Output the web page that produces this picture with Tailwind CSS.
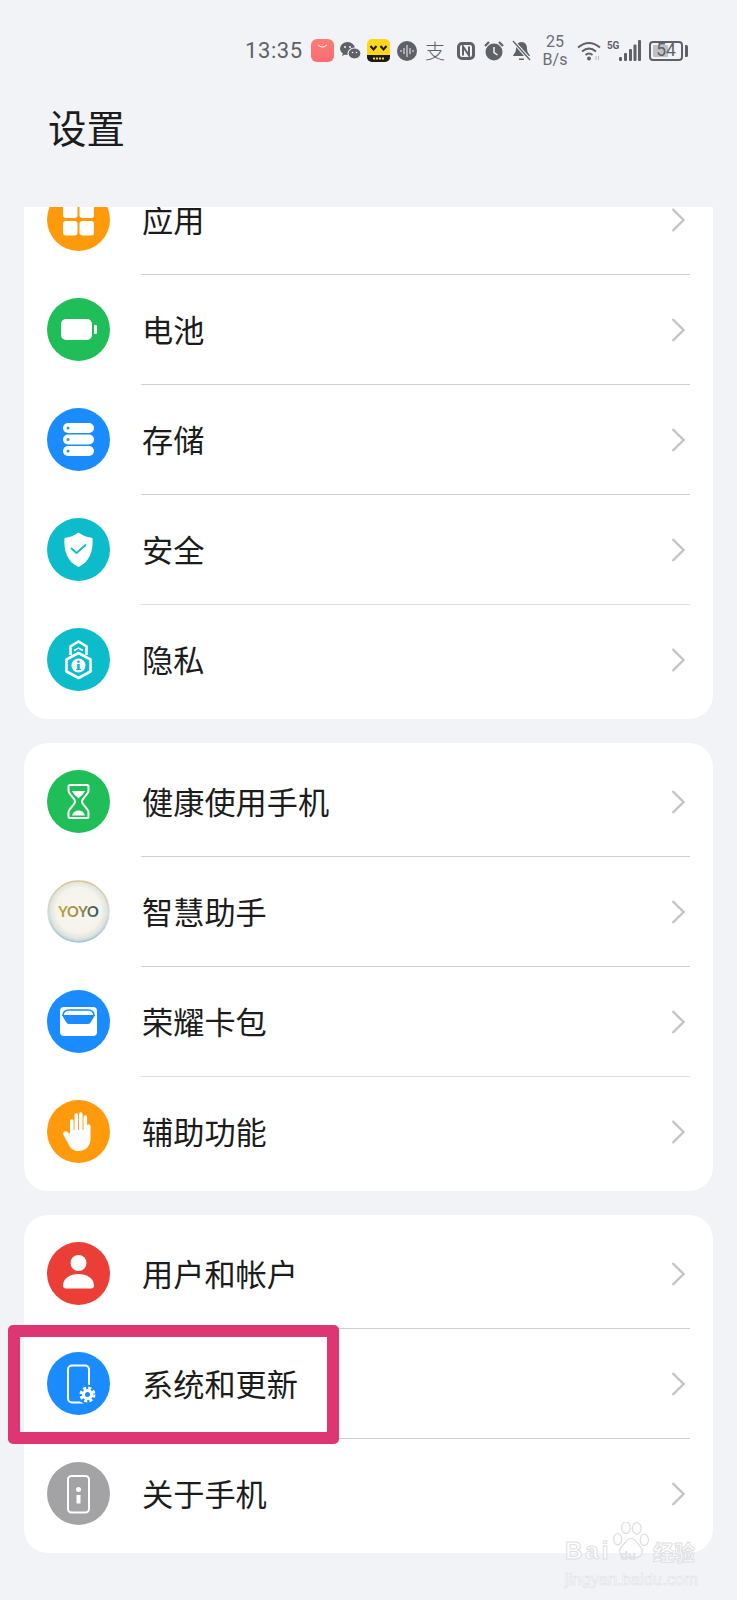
<!DOCTYPE html>
<html lang="zh-CN">
<head>
    <meta charset="UTF-8">
    <meta name="viewport" content="width=device-width, initial-scale=1.0">
    <title>设置</title>
    <script src="https://cdn.jsdelivr.net/npm/@tailwindcss/browser@4"></script>
</head>
<body class="relative w-[737px] h-[1600px] overflow-hidden bg-[#f1f3f7] font-['Noto_Sans_CJK_SC',sans-serif] text-[#1c1c1c]">

    <!-- Status bar -->
    <div class="h-[100px] pt-[1px] flex items-center pl-[245px] text-[#5e6167] font-['Roboto',sans-serif]">
        <span class="w-[60px] text-[22px] tracking-[0.6px]">13:35</span>
        <svg class="ml-[6px]" width="23" height="23" viewBox="0 0 23 23"><defs><linearGradient id="shopBg" x1="0" y1="0" x2="0" y2="1"><stop offset="0%" stop-color="#fb7d74"/><stop offset="100%" stop-color="#fb6b73"/></linearGradient></defs><rect width="23" height="23" rx="6" fill="url(#shopBg)"/><path d="M7 6q4.500 4 9 0" fill="none" stroke="#fff" stroke-width="1"/></svg>
        <svg class="ml-[6px]" width="21" height="18" viewBox="0 0 21 18" fill="#5e6167"><ellipse cx="7.500" cy="6.500" rx="7.500" ry="6.500"/><path d="M3 11l-1 3 4-2z"/><ellipse cx="14.500" cy="11.500" rx="6.500" ry="5.500" stroke="#f1f3f7" stroke-width="1.200"/><circle cx="5" cy="5" r="1" fill="#f1f3f7"/><circle cx="10" cy="5" r="1" fill="#f1f3f7"/><circle cx="12.500" cy="10.500" r=".8" fill="#f1f3f7"/><circle cx="16.500" cy="10.500" r=".8" fill="#f1f3f7"/></svg>
        <svg class="ml-[6px]" width="23" height="23" viewBox="0 0 23 23"><rect width="23" height="23" rx="5" fill="#fdd71c"/><path d="M0 16h23v2a5 5 0 0 1-5 5H5a5 5 0 0 1-5-5z" fill="#1a1a1a"/><path d="M3.500 7l3 3.500 3-3.500M13.500 7l3 3.500 3-3.500" fill="none" stroke="#1a1a1a" stroke-width="2"/><path d="M6 19.500h11" stroke="#fdd71c" stroke-width="2" stroke-dasharray="2 1"/></svg>
        <svg class="ml-[7px]" width="20" height="20" viewBox="0 0 20 20"><circle cx="10" cy="10" r="10" fill="#5e6167"/><path d="M4 9v2M7 7v6M10 4v12M13 7v6M16 9v2" stroke="#f1f3f7" stroke-width="1"/></svg>
        <span class="ml-[8px] w-[21px] text-[20px] leading-none font-['Noto_Sans_CJK_SC',sans-serif] font-light">支</span>
        <svg class="ml-[11px]" width="18" height="18" viewBox="0 0 18 18" fill="none"><rect x="1.500" y="1.500" width="15" height="15" rx="3.500" stroke="#5e6167" stroke-width="3"/><path d="M6 13.500V4.500l6 9V4.500" stroke="#5e6167" stroke-width="2"/></svg>
        <svg class="ml-[9px]" width="20" height="20" viewBox="0 0 20 20"><circle cx="10" cy="11" r="8.500" fill="#5e6167"/><path d="M10 6v5.500l3.500 2.500" fill="none" stroke="#f1f3f7" stroke-width="1.500"/><path d="M1 5l4-4M19 5l-4-4" stroke="#5e6167" stroke-width="2.200"/></svg>
        <svg class="ml-[8px]" width="19" height="22" viewBox="0 0 19 22"><path d="M9.500 2c-4 0-5.500 3-5.500 6.500 0 4-2 5-3 7.500h17c-1-2.500-3-3.500-3-7.500C15 5 13.500 2 9.500 2z" fill="#5e6167"/><path d="M7 18.500h5V20H7z" fill="#5e6167"/><path d="M1 1l17 19" stroke="#f1f3f7" stroke-width="3.500"/><path d="M1 1l17 19" stroke="#5e6167" stroke-width="1.300"/></svg>
        <span class="ml-[11px] w-[26px] flex flex-col items-center text-[16px] leading-[18px] text-[#6a6d73]"><span>25</span><span>B/s</span></span>
        <svg class="ml-[9px]" width="24" height="20" viewBox="0 0 24 20" fill="none" stroke="#5e6167" stroke-width="2"><path d="M1 6.500q11-9 22 0M5 10.500q7-6 14 0M8.500 14q3.500-3 7 0"/><circle cx="12" cy="17.500" r="2" fill="#5e6167" stroke="none"/><path d="M19 15v4M21.500 15v4" stroke="#b5b7bb" stroke-width="1"/></svg>
        <span class="ml-[6px] self-start mt-[40px] w-[12px] text-[10px] font-bold leading-[9px] tracking-[-0.3px]">5G</span>
        <svg class="ml-[0px]" width="22" height="21" viewBox="0 0 22 21" fill="#5e6167"><rect x="0" y="17" width="3" height="4" rx="1"/><rect x="5" y="13" width="3" height="8" rx="1"/><rect x="10" y="9" width="3" height="12" rx="1"/><rect x="14.500" y="4.500" width="3" height="16.500" rx="1"/><rect x="19" y="0" width="3" height="21" rx="1"/></svg>
        <div class="ml-[8px] relative w-[34px] h-[20px] border-2 border-[#5e6167] rounded-[4px] flex items-center justify-center">
            <span class="absolute left-[2px] top-[2px] w-[15px] h-[12px] bg-[#bfc1c5] rounded-[1px]"></span>
            <span class="relative mt-[1px] text-[17.500px] leading-none">54</span>
        </div>
        <span class="ml-[1.500px] w-[3px] h-[12px] bg-[#5e6167] rounded-r-[1.500px]"></span>
    </div>

    <!-- Title -->
    <div class="h-[107px] pl-[48px] pt-[1px]">
        <h1 class="text-[38.500px] leading-[50px] font-normal">设置</h1>
    </div>

    <!-- List -->
    <div class="pl-[24px] pr-[24px]">
        <!-- Card 1, scrolled under the title -->
        <div class="h-[512px] overflow-hidden bg-white rounded-b-[24px]">
            <div class="-mt-[42px]">
                <div class="h-[110px] flex items-center pl-[23px] pr-[23px]">
                    <div class="-mt-[2px] w-[63px] h-[63px] shrink-0">
                        <svg width="63" height="63" viewBox="0 0 63 63"><circle cx="31.500" cy="31.500" r="31.500" fill="#ff9a0d"/><rect x="16" y="15" width="14.500" height="15" rx="3" fill="#fff"/><rect x="32.500" y="15" width="14.500" height="15" rx="3" fill="#fff"/><rect x="16" y="33" width="14.500" height="14.500" rx="3" fill="#fff"/><rect x="32.500" y="33" width="14.500" height="14.500" rx="3" fill="#fff"/></svg>
                    </div>
                    <div class="ml-[31px] h-full flex-1 flex items-center justify-between border-b border-[#cfcfd1]">
                        <span class="ml-[1px] -mt-[2px] text-[31.200px] leading-none">应用</span>
                        <svg class="mr-[5px]" width="14" height="24" viewBox="0 0 14 24" fill="none" stroke="#c4c4c6" stroke-width="2.400"><path d="M1.500 1l11 11-11 11"/></svg>
                    </div>
                </div>
                <div class="h-[110px] flex items-center pl-[23px] pr-[23px]">
                    <div class="-mt-[2px] w-[63px] h-[63px] shrink-0">
                        <svg width="63" height="63" viewBox="0 0 63 63"><circle cx="31.500" cy="31.500" r="31.500" fill="#1fbe58"/><rect x="14" y="21" width="31" height="21" rx="5" fill="#fff"/><rect x="47" y="27" width="3" height="9" rx="1" fill="#fff"/></svg>
                    </div>
                    <div class="ml-[31px] h-full flex-1 flex items-center justify-between border-b border-[#cfcfd1]">
                        <span class="ml-[1px] -mt-[2px] text-[31.200px] leading-none">电池</span>
                        <svg class="mr-[5px]" width="14" height="24" viewBox="0 0 14 24" fill="none" stroke="#c4c4c6" stroke-width="2.400"><path d="M1.500 1l11 11-11 11"/></svg>
                    </div>
                </div>
                <div class="h-[110px] flex items-center pl-[23px] pr-[23px]">
                    <div class="-mt-[2px] w-[63px] h-[63px] shrink-0">
                        <svg width="63" height="63" viewBox="0 0 63 63"><circle cx="31.500" cy="31.500" r="31.500" fill="#1a8cff"/><rect x="16" y="15" width="31" height="10" rx="5" fill="#fff"/><rect x="16" y="26.500" width="31" height="10" rx="5" fill="#fff"/><rect x="16" y="38" width="31" height="10" rx="5" fill="#fff"/><circle cx="21" cy="20" r="1.500" fill="#3f8fd6"/><circle cx="21" cy="31.500" r="1.500" fill="#3f8fd6"/><circle cx="21" cy="43" r="1.500" fill="#3f8fd6"/></svg>
                    </div>
                    <div class="ml-[31px] h-full flex-1 flex items-center justify-between border-b border-[#cfcfd1]">
                        <span class="ml-[1px] -mt-[2px] text-[31.200px] leading-none">存储</span>
                        <svg class="mr-[5px]" width="14" height="24" viewBox="0 0 14 24" fill="none" stroke="#c4c4c6" stroke-width="2.400"><path d="M1.500 1l11 11-11 11"/></svg>
                    </div>
                </div>
                <div class="h-[110px] flex items-center pl-[23px] pr-[23px]">
                    <div class="-mt-[2px] w-[63px] h-[63px] shrink-0">
                        <svg width="63" height="63" viewBox="0 0 63 63"><circle cx="31.500" cy="31.500" r="31.500" fill="#0cbccb"/><path d="M31.500 14.500c4 3 9 5 14 5.500 1 13-3 24-14 29-11-5-15-16-14-29 5-.5 10-2.500 14-5.500z" fill="#fff"/><path d="M24.500 30.500l5 4.500 9-8" fill="none" stroke="#0cbccb" stroke-width="1.800" stroke-linecap="round" stroke-linejoin="round"/></svg>
                    </div>
                    <div class="ml-[31px] h-full flex-1 flex items-center justify-between border-b border-[#dedee0]">
                        <span class="ml-[1px] -mt-[2px] text-[31.200px] leading-none">安全</span>
                        <svg class="mr-[5px]" width="14" height="24" viewBox="0 0 14 24" fill="none" stroke="#c4c4c6" stroke-width="2.400"><path d="M1.500 1l11 11-11 11"/></svg>
                    </div>
                </div>
                <div class="h-[110px] flex items-center pl-[23px] pr-[23px]">
                    <div class="-mt-[2px] w-[63px] h-[63px] shrink-0">
                        <svg width="63" height="63" viewBox="0 0 63 63"><circle cx="31.500" cy="31.500" r="31.500" fill="#0cbccb"/><path d="M31.500 25l12 6.500v12L31.500 50l-12-6.500v-12z" fill="none" stroke="#fff" stroke-width="2.600" stroke-linejoin="round"/><path d="M23.500 27v-8.500l8-5 8 5V27" fill="none" stroke="#fff" stroke-width="2.600"/><path d="M27 22.500l4.500-2.500 4.500 2.500" fill="none" stroke="#fff" stroke-width="1.500"/><circle cx="31.500" cy="37.500" r="7" fill="#fff"/><circle cx="31.500" cy="33.800" r="1.300" fill="#0cbccb"/><path d="M30 36h2.800v5H34v1h-5v-1h1.200v-4H30z" fill="#0cbccb"/></svg>
                    </div>
                    <div class="ml-[31px] h-full flex-1 flex items-center justify-between">
                        <span class="ml-[1px] -mt-[2px] text-[31.200px] leading-none">隐私</span>
                        <svg class="mr-[5px]" width="14" height="24" viewBox="0 0 14 24" fill="none" stroke="#c4c4c6" stroke-width="2.400"><path d="M1.500 1l11 11-11 11"/></svg>
                    </div>
                </div>
            </div>
        </div>

        <!-- Card 2 -->
        <div class="mt-[24px] bg-white rounded-[24px] pt-[4px] pb-[4px]">
            <div class="h-[110px] flex items-center pl-[23px] pr-[23px]">
                <div class="-mt-[2px] w-[63px] h-[63px] shrink-0">
                    <svg width="63" height="63" viewBox="0 0 63 63"><circle cx="31.500" cy="31.500" r="31.500" fill="#1fbe58"/><path d="M23 15h17q1.500 0 1.500 1.500v4c0 4-6.500 7.500-6.500 11s6.500 7 6.500 11v4Q41.500 48 40 48H23q-1.500 0-1.500-1.500v-4c0-4 6.500-7.500 6.500-11s-6.500-7-6.500-11v-4Q21.500 15 23 15z" fill="none" stroke="#fff" stroke-width="2" stroke-linejoin="round"/><path d="M25 21h13c-1 3-4.500 5-6.500 7.500-2-2.500-5.500-4.500-6.500-7.500zM25 45.500c1-3.500 3.500-5 6.500-5s5.500 1.500 6.500 5z" fill="#fff"/></svg>
                </div>
                <div class="ml-[31px] h-full flex-1 flex items-center justify-between border-b border-[#cfcfd1]">
                    <span class="ml-[1px] -mt-[2px] text-[31.200px] leading-none">健康使用手机</span>
                    <svg class="mr-[5px]" width="14" height="24" viewBox="0 0 14 24" fill="none" stroke="#c4c4c6" stroke-width="2.400"><path d="M1.500 1l11 11-11 11"/></svg>
                </div>
            </div>
            <div class="h-[110px] flex items-center pl-[23px] pr-[23px]">
                <div class="-mt-[2px] w-[63px] h-[63px] shrink-0">
                    <svg width="63" height="63" viewBox="0 0 63 63"><defs><radialGradient id="yoyoBall" cx="50%" cy="48%" r="52%"><stop offset="0%" stop-color="#f8f7f1"/><stop offset="72%" stop-color="#f5f3ea"/><stop offset="90%" stop-color="#dfe3df"/><stop offset="100%" stop-color="#b9c9d2"/></radialGradient><linearGradient id="yoyoText" x1="0" y1="0" x2="1" y2="0"><stop offset="0%" stop-color="#c79f3a"/><stop offset="55%" stop-color="#9c8b4c"/><stop offset="100%" stop-color="#24505e"/></linearGradient><linearGradient id="yoyoRim" x1="0" y1="0" x2="0" y2="1"><stop offset="0%" stop-color="#dcc38b"/><stop offset="55%" stop-color="#d8dcdc"/><stop offset="100%" stop-color="#9cc6dc"/></linearGradient></defs><circle cx="31.500" cy="31.500" r="30.500" fill="url(#yoyoBall)" stroke="url(#yoyoRim)" stroke-width="1.500"/><text x="31.500" y="36.500" text-anchor="middle" font-family="Lato, sans-serif" font-size="14.500" font-weight="700" fill="url(#yoyoText)">YOYO</text></svg>
                </div>
                <div class="ml-[31px] h-full flex-1 flex items-center justify-between border-b border-[#cfcfd1]">
                    <span class="ml-[1px] -mt-[2px] text-[31.200px] leading-none">智慧助手</span>
                    <svg class="mr-[5px]" width="14" height="24" viewBox="0 0 14 24" fill="none" stroke="#c4c4c6" stroke-width="2.400"><path d="M1.500 1l11 11-11 11"/></svg>
                </div>
            </div>
            <div class="h-[110px] flex items-center pl-[23px] pr-[23px]">
                <div class="-mt-[2px] w-[63px] h-[63px] shrink-0">
                    <svg width="63" height="63" viewBox="0 0 63 63"><circle cx="31.500" cy="31.500" r="31.500" fill="#1a8cff"/><rect x="13" y="17" width="37" height="29" rx="4" fill="#fff"/><path d="M16 26q0-6 6-6h19q6 0 6 6" fill="none" stroke="#1a8cff" stroke-width="1.600"/><path d="M15 25h33l-4 7q-1 2-3 2H22q-2 0-3-2z" fill="#1a8cff"/></svg>
                </div>
                <div class="ml-[31px] h-full flex-1 flex items-center justify-between border-b border-[#dedee0]">
                    <span class="ml-[1px] -mt-[2px] text-[31.200px] leading-none">荣耀卡包</span>
                    <svg class="mr-[5px]" width="14" height="24" viewBox="0 0 14 24" fill="none" stroke="#c4c4c6" stroke-width="2.400"><path d="M1.500 1l11 11-11 11"/></svg>
                </div>
            </div>
            <div class="h-[110px] flex items-center pl-[23px] pr-[23px]">
                <div class="-mt-[2px] w-[63px] h-[63px] shrink-0">
                    <svg width="63" height="63" viewBox="0 0 63 63"><circle cx="31.500" cy="31.500" r="31.500" fill="#ff9a0d"/><path d="M23 34V21a1.800 1.800 0 0 1 3.600 0v9h.9V15a1.800 1.800 0 0 1 3.600 0v15h.9V14a1.800 1.800 0 0 1 3.600 0v16h.9V17a1.800 1.800 0 0 1 3.600 0v9 0a1.700 1.700 0 0 1 3.400 0v13c0 7-5 12-11.500 12-5 0-8-2-10-6l-5.500-10c-1.500-3 2-5 4-3z" fill="#fff"/></svg>
                </div>
                <div class="ml-[31px] h-full flex-1 flex items-center justify-between">
                    <span class="ml-[1px] -mt-[2px] text-[31.200px] leading-none">辅助功能</span>
                    <svg class="mr-[5px]" width="14" height="24" viewBox="0 0 14 24" fill="none" stroke="#c4c4c6" stroke-width="2.400"><path d="M1.500 1l11 11-11 11"/></svg>
                </div>
            </div>
        </div>

        <!-- Card 3 -->
        <div class="mt-[24px] bg-white rounded-[24px] pt-[4px] pb-[4px]">
            <div class="h-[110px] flex items-center pl-[23px] pr-[23px]">
                <div class="-mt-[2px] w-[63px] h-[63px] shrink-0">
                    <svg width="63" height="63" viewBox="0 0 63 63"><circle cx="31.500" cy="31.500" r="31.500" fill="#ea3e36"/><circle cx="31.500" cy="21" r="8" fill="#fff"/><path d="M16 43.500c0-7 7-11.500 15.500-11.500S47 36.500 47 43.500q0 3-3 3H19q-3 0-3-3z" fill="#fff"/></svg>
                </div>
                <div class="ml-[31px] h-full flex-1 flex items-center justify-between border-b border-[#cfcfd1]">
                    <span class="ml-[1px] -mt-[2px] text-[31.200px] leading-none">用户和帐户</span>
                    <svg class="mr-[5px]" width="14" height="24" viewBox="0 0 14 24" fill="none" stroke="#c4c4c6" stroke-width="2.400"><path d="M1.500 1l11 11-11 11"/></svg>
                </div>
            </div>
            <div class="h-[110px] flex items-center pl-[23px] pr-[23px]">
                <div class="-mt-[2px] w-[63px] h-[63px] shrink-0">
                    <svg width="63" height="63" viewBox="0 0 63 63"><circle cx="31.500" cy="31.500" r="31.500" fill="#1a8cff"/><rect x="21" y="13.500" width="21" height="37" rx="4" fill="none" stroke="#fff" stroke-width="2"/><circle cx="40.500" cy="42.500" r="10" fill="#1a8cff"/><circle cx="40.500" cy="42.500" r="5.500" fill="#fff"/><circle cx="40.500" cy="42.500" r="6.500" fill="none" stroke="#fff" stroke-width="3" stroke-dasharray="3 2.100"/><circle cx="40.500" cy="42.500" r="2.500" fill="#1a8cff"/></svg>
                </div>
                <div class="ml-[31px] h-full flex-1 flex items-center justify-between border-b border-[#cfcfd1]">
                    <span class="ml-[1px] -mt-[2px] text-[31.200px] leading-none">系统和更新</span>
                    <svg class="mr-[5px]" width="14" height="24" viewBox="0 0 14 24" fill="none" stroke="#c4c4c6" stroke-width="2.400"><path d="M1.500 1l11 11-11 11"/></svg>
                </div>
            </div>
            <div class="h-[110px] flex items-center pl-[23px] pr-[23px]">
                <div class="-mt-[2px] w-[63px] h-[63px] shrink-0">
                    <svg width="63" height="63" viewBox="0 0 63 63"><circle cx="31.500" cy="31.500" r="31.500" fill="#a3a3a6"/><rect x="21" y="14" width="21" height="36.500" rx="3.500" fill="none" stroke="#fff" stroke-width="2"/><circle cx="31.500" cy="27.500" r="2.500" fill="#fff"/><rect x="29.500" y="33" width="4" height="8.500" fill="#fff"/></svg>
                </div>
                <div class="ml-[31px] h-full flex-1 flex items-center justify-between">
                    <span class="ml-[1px] -mt-[2px] text-[31.200px] leading-none">关于手机</span>
                    <svg class="mr-[5px]" width="14" height="24" viewBox="0 0 14 24" fill="none" stroke="#c4c4c6" stroke-width="2.400"><path d="M1.500 1l11 11-11 11"/></svg>
                </div>
            </div>
        </div>
    </div>

    <!-- Highlight box drawn over the screenshot -->
    <div class="absolute left-[8px] top-[1325px] w-[331px] h-[119px] border-[12px] border-[#dd3673] rounded-[5px]"></div>

    <!-- Baidu watermark -->
    <div class="absolute left-[563px] top-[1520px] w-[170px] h-[80px] text-white/80 font-['Liberation_Sans',sans-serif]">
        <div class="absolute left-[2px] top-[19px] text-[24px] leading-[24px] font-bold tracking-[3px] [-webkit-text-stroke:1px_#dfe0e4]">Bai</div>
        <svg class="absolute left-[49px] top-[2px]" width="38" height="40" viewBox="0 0 60 63" fill="#fbfbfc" fill-opacity=".5" stroke="#dcdde1" stroke-width="1.800"><ellipse cx="9" cy="27" rx="6.500" ry="9"/><ellipse cx="22" cy="9" rx="7" ry="9"/><ellipse cx="39" cy="10" rx="7" ry="9"/><ellipse cx="51" cy="28" rx="6.500" ry="9"/><path d="M30 26c7 0 9 7 15 13 6 6 2 18-8 17-3 0-5-1-7-1s-4 1-7 1c-10 1-14-11-8-17 6-6 8-13 15-13z"/></svg>
        <div class="absolute left-[57px] top-[29px] text-[13px] leading-[13px] font-bold text-[#e0e1e5]">du</div>
        <div class="absolute left-[90px] top-[20px] text-[21px] leading-[22px] font-['Noto_Sans_CJK_SC',sans-serif] font-bold [-webkit-text-stroke:1px_#dfe0e4]">经验</div>
        <div class="absolute left-[2px] top-[49px] text-[16.500px] leading-[20px] [-webkit-text-stroke:0.6px_#dfe0e4]">jingyan.baidu.com</div>
    </div>
</body>
</html>
